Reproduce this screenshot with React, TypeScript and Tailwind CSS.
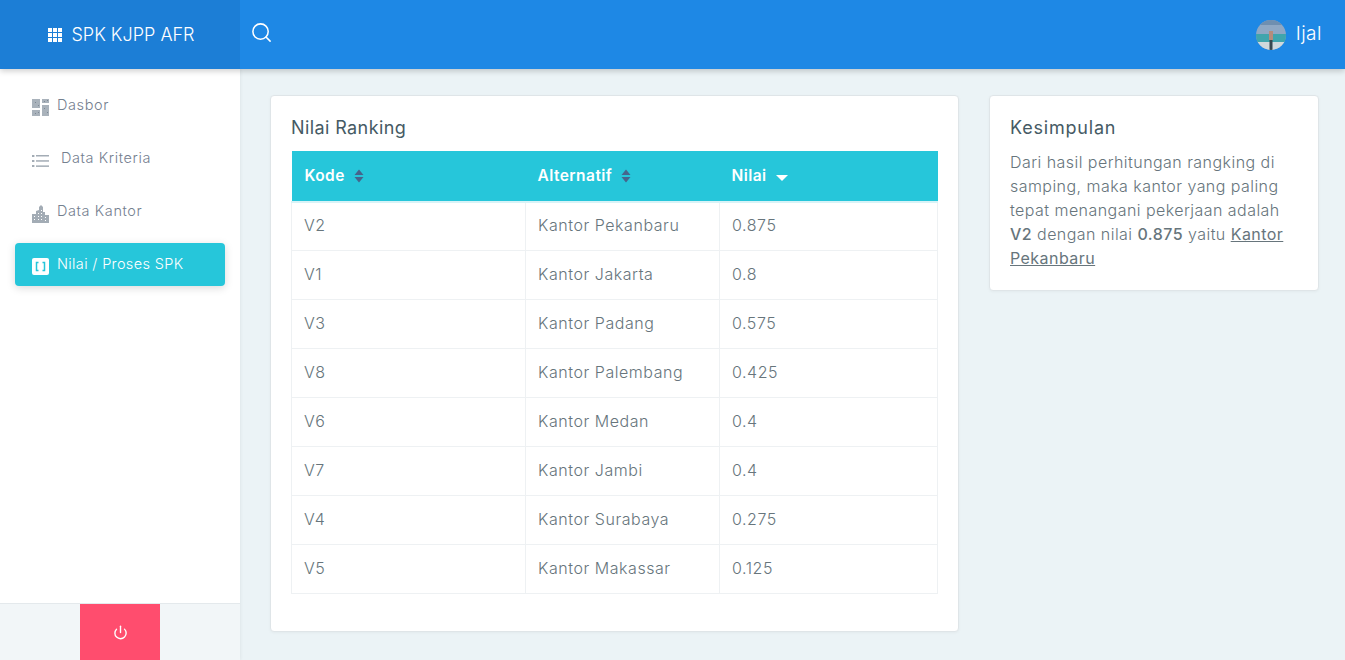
import { Power, Search } from 'lucide-react';

const FONT = "font-['Inter','Noto_Sans',sans-serif]";

const ROWS = [
  ['V2', 'Kantor Pekanbaru', '0.875'],
  ['V1', 'Kantor Jakarta', '0.8'],
  ['V3', 'Kantor Padang', '0.575'],
  ['V8', 'Kantor Palembang', '0.425'],
  ['V6', 'Kantor Medan', '0.4'],
  ['V7', 'Kantor Jambi', '0.4'],
  ['V4', 'Kantor Surabaya', '0.275'],
  ['V5', 'Kantor Makassar', '0.125'],
];

const GridIcon = () => (
  <svg width="14" height="14" viewBox="0 0 14 14" fill="#fff">
    {[0, 5, 10].map((y) =>
      [0, 5, 10].map((x) => <rect key={`${x}-${y}`} x={x} y={y} width="4" height="4" />)
    )}
  </svg>
);

const DashIcon = () => (
  <svg width="17" height="17" viewBox="0 0 17 17">
    <g fill="#a9b2bb">
      <rect x="0" y="0" width="8" height="9" />
      <rect x="10" y="0" width="7" height="4" />
      <rect x="10" y="6" width="7" height="11" />
      <rect x="0" y="11" width="8" height="6" />
    </g>
    <g fill="#7d8894">
      <rect x="3" y="3" width="1" height="1" />
      <rect x="6" y="6" width="1" height="1" />
      <rect x="12" y="2" width="1" height="1" />
      <rect x="15" y="1" width="1" height="1" />
      <rect x="12" y="9" width="1" height="1" />
      <rect x="15" y="13" width="1" height="1" />
      <rect x="3" y="14" width="1" height="1" />
      <rect x="6" y="13" width="1" height="1" />
    </g>
  </svg>
);

const ListIcon = () => (
  <svg width="17" height="14" viewBox="0 0 17 14" fill="#a3acb5">
    <rect x="0" y="1" width="2.4" height="2" />
    <rect x="4" y="1" width="13" height="1.5" />
    <rect x="0" y="6" width="2.4" height="2" />
    <rect x="4" y="6.2" width="13" height="1.5" />
    <rect x="0" y="11" width="2.4" height="2" />
    <rect x="4" y="11.4" width="13" height="1.5" />
  </svg>
);

const CityIcon = () => (
  <svg width="17" height="18" viewBox="0 0 17 18" fill="#a3acb5">
    <path d="M0 9h4V6l3-1V2l2-2 2 2v5h2v3h4v8H0z" />
    <g fill="#fff">
      <rect x="2" y="11" width="1" height="1" />
      <rect x="2" y="14" width="1" height="1" />
      <rect x="6" y="8" width="1" height="1" />
      <rect x="6" y="11" width="1" height="1" />
      <rect x="6" y="14" width="1" height="1" />
      <rect x="9" y="5" width="1" height="1" />
      <rect x="9" y="8" width="1" height="1" />
      <rect x="9" y="11" width="1" height="1" />
      <rect x="9" y="14" width="1" height="1" />
      <rect x="13" y="12" width="1" height="1" />
      <rect x="13" y="15" width="1" height="1" />
    </g>
  </svg>
);

const BracketIcon = () => (
  <svg width="17" height="17" viewBox="0 0 17 17">
    <rect width="17" height="17" rx="2" fill="#fff" />
    <path d="M6.5 4.5h-2v8h2M10.5 4.5h2v8h-2" fill="none" stroke="#26c6da" strokeWidth="1.5" />
  </svg>
);

const Avatar = () => (
  <svg width="30" height="30" viewBox="0 0 30 30" className="rounded-full">
    <rect width="30" height="30" fill="#8fa8c4" />
    <rect y="0" width="30" height="5" fill="#6f8fb0" />
    <rect y="14" width="30" height="8" fill="#3fa5ad" />
    <rect y="22" width="30" height="8" fill="#cfd8dc" />
    <rect x="13" y="11" width="4" height="9" fill="#b58c7c" />
    <rect x="13.5" y="20" width="3" height="10" fill="#37474f" />
  </svg>
);

const SortBoth = () => (
  <svg width="10" height="14" viewBox="0 0 10 14" fill="#46658c">
    <path d="M5 0.5 9.5 6h-9zM.5 8h9L5 13.5z" />
  </svg>
);

const SortDown = () => (
  <svg width="12" height="6" viewBox="0 0 12 6" fill="#fff">
    <path d="M0 0h12L6 6z" />
  </svg>
);

const NavItem = ({
  icon,
  label,
  active,
  gap = 'gap-2',
  tracking = 'tracking-[0.6px]',
}: {
  icon: React.ReactNode;
  label: string;
  active?: boolean;
  gap?: string;
  tracking?: string;
}) => (
  <div
    className={`flex h-[43px] items-center rounded pl-[17px] text-[14.5px] ${gap} ${
      active
        ? 'bg-[#26c6da] text-white shadow-[0_2px_8px_rgba(0,0,0,0.15)]'
        : 'text-[#75808f]'
    }`}
  >
    <span className="mt-1 flex w-[17px] shrink-0 justify-center">{icon}</span>
    <span className={`-mt-[1px] ${tracking}`}>{label}</span>
  </div>
);

const App = () => {
  return (
    <div className={`flex h-[660px] flex-col overflow-hidden bg-[#ebf3f6] font-light ${FONT}`}>
      <header className="relative z-10 flex h-[69px] shrink-0 items-center bg-[#1e88e5] shadow-[0_2px_6px_rgba(0,0,0,0.2)]">
        <div className="flex h-full w-[240px] items-center justify-center gap-[9px] bg-[#1c7ed6] pl-[3px] text-[18px] text-white">
          <GridIcon />
          <span>SPK KJPP AFR</span>
        </div>
        <div className="pl-[10px] pb-[4px] text-white">
          <Search size={23} strokeWidth={1.6} />
        </div>
        <div className="ml-auto flex items-center gap-[10px] pr-[23px] text-[19px] tracking-[0.5px] text-white">
          <Avatar />
          <span>Ijal</span>
        </div>
      </header>

      <div className="flex min-h-0 flex-1">
        <aside className="flex w-[240px] shrink-0 flex-col bg-white shadow-[1px_0_3px_rgba(0,0,0,0.05)]">
          <nav className="flex flex-1 flex-col gap-[10px] px-[15px] pt-[15px]">
            <NavItem icon={<DashIcon />} label="Dasbor" />
            <NavItem icon={<ListIcon />} label="Data Kriteria" gap="gap-3" />
            <NavItem icon={<CityIcon />} label="Data Kantor" />
            <NavItem icon={<BracketIcon />} label="Nilai / Proses SPK" tracking="tracking-[0.35px]" active />
          </nav>
          <div className="flex h-[57px] justify-center border-t border-[#e4e9ec] bg-[#f2f6f8]">
            <button type="button" className="flex w-[80px] items-center justify-center bg-[#ff4d6e] text-white">
              <Power size={15} strokeWidth={2.2} />
            </button>
          </div>
        </aside>

        <main className="flex flex-1 items-start gap-[30px] pl-[30px] pr-[26px] pt-[26px]">
          <section className="h-[537px] w-[689px] rounded border border-[#dfe5e8] bg-white px-[20px] pt-[20px] shadow-[0_1px_3px_rgba(0,0,0,0.04)]">
            <h2 className="mb-[9px] h-[26px] text-[18px] leading-[24px] font-normal tracking-[0.4px] text-[#455a64]">Nilai Ranking</h2>
            <table className="w-[647px] table-fixed border-collapse text-[16px] leading-[22px] tracking-[0.55px] text-[#67757c]">
              <colgroup>
                <col className="w-[234px]" />
                <col className="w-[194px]" />
                <col />
              </colgroup>
              <thead>
                <tr className="h-[51px] border-b-2 border-[#d8f3f7] bg-[#26c6da] text-left text-white">
                  <th className="pl-[13px] font-semibold">
                    <span className="flex items-center gap-[9px] text-[15.5px] tracking-[0.45px]">Kode <SortBoth /></span>
                  </th>
                  <th className="pl-[12px] font-semibold">
                    <span className="flex items-center gap-[9px] text-[15.5px] tracking-[0.45px]">Alternatif <SortBoth /></span>
                  </th>
                  <th className="pl-[12px] font-semibold">
                    <span className="flex items-center gap-[9px] text-[15.5px] tracking-[0.45px]">Nilai <span className="mt-1"><SortDown /></span></span>
                  </th>
                </tr>
              </thead>
              <tbody>
                {ROWS.map(([code, name, score], i) => (
                  <tr key={code} className={i === 0 ? 'h-[48px]' : 'h-[49px]'}>
                    <td className="border border-[#eef1f3] pb-[2px] pl-[12px]">{code}</td>
                    <td className="border border-[#eef1f3] pb-[2px] pl-[12px]">{name}</td>
                    <td className="border border-[#eef1f3] pb-[2px] pl-[12px]">{score}</td>
                  </tr>
                ))}
              </tbody>
            </table>
          </section>

          <section className="h-[196px] w-[330px] rounded border border-[#dfe5e8] bg-white px-[20px] pt-[20px] shadow-[0_1px_3px_rgba(0,0,0,0.04)]">
            <h2 className="mb-[8px] h-[26px] text-[18px] leading-[24px] font-normal tracking-[0.8px] text-[#455a64]">Kesimpulan</h2>
            <p className="text-[16px] leading-[24px] tracking-[0.45px] text-[#67757c]">
              Dari hasil perhitungan rangking di samping, maka kantor yang paling tepat menangani pekerjaan adalah{' '}
              <b className="font-medium">V2</b> dengan nilai <b className="font-medium">0.875</b> yaitu{' '}
              <u className="font-normal">Kantor Pekanbaru</u>
            </p>
          </section>
        </main>
      </div>
    </div>
  );
};

export default App;
